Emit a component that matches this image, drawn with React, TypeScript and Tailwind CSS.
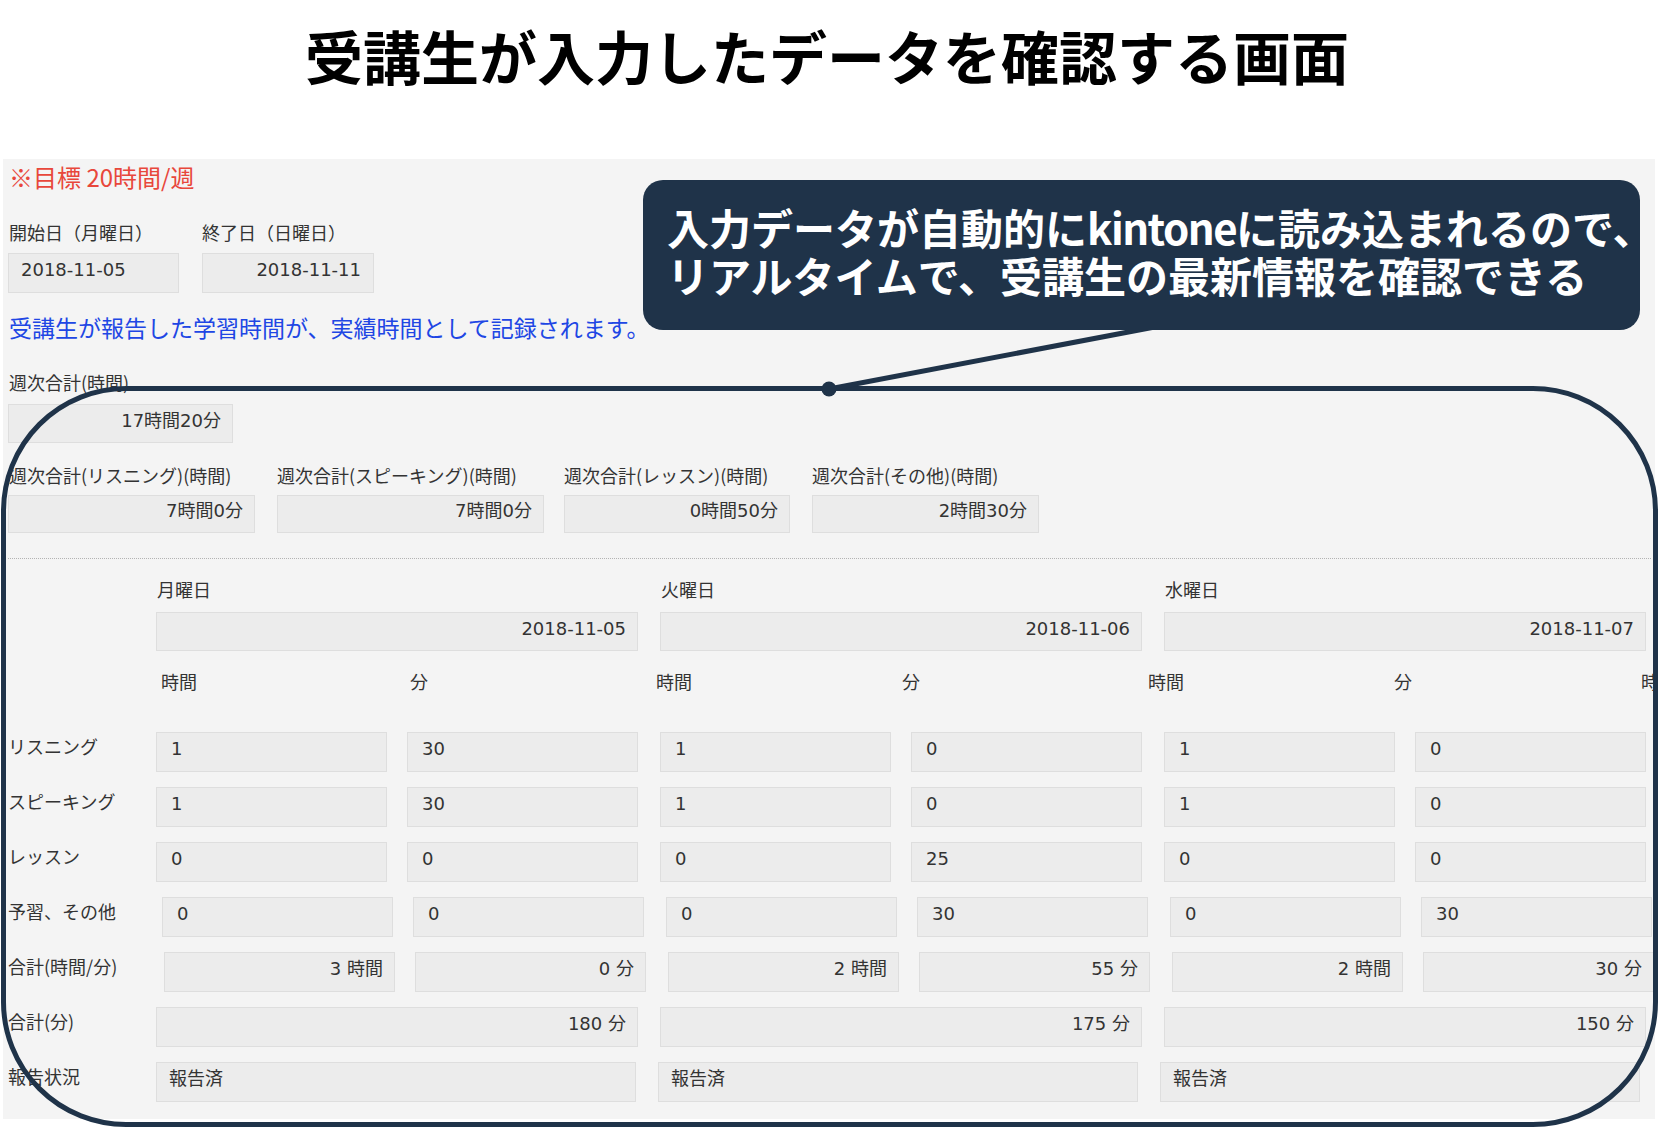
import React from 'react';
import clsx from 'clsx';

type Day = {
    name: string;
    date: string;
    rows: [string, string][];
    hm: [string, string];
    total: string;
    status: string;
};

const days: Day[] = [
    {
        name: '月曜日',
        date: '2018-11-05',
        rows: [['1', '30'], ['1', '30'], ['0', '0'], ['0', '0']],
        hm: ['3 時間', '0 分'],
        total: '180 分',
        status: '報告済',
    },
    {
        name: '火曜日',
        date: '2018-11-06',
        rows: [['1', '0'], ['1', '0'], ['0', '25'], ['0', '30']],
        hm: ['2 時間', '55 分'],
        total: '175 分',
        status: '報告済',
    },
    {
        name: '水曜日',
        date: '2018-11-07',
        rows: [['1', '0'], ['1', '0'], ['0', '0'], ['0', '30']],
        hm: ['2 時間', '30 分'],
        total: '150 分',
        status: '報告済',
    },
];

const rowLabels = ['リスニング', 'スピーキング', 'レッスン', '予習、その他'];
// 予習、その他 and 合計(時間/分) sit a few px to the right in the original form
const rowShift = ['', '', '', 'pl-[6px]'];

const Box = ({ children, right, className }: { children?: React.ReactNode; right?: boolean; className?: string }) => (
    <div
        className={clsx(
            "h-[40px] shrink-0 bg-[#ececec] border border-[#dedede] flex items-center pb-[7px] font-['DejaVu_Sans','Noto_Sans_CJK_JP',sans-serif] text-[18px] text-[#333] whitespace-nowrap",
            right ? 'justify-end pr-[11px]' : 'pl-[14px]',
            className
        )}
    >
        {children}
    </div>
);

const Label = ({ children, className }: { children: React.ReactNode; className?: string }) => (
    <div className={clsx('text-[18px] leading-[24px] text-[#333] whitespace-nowrap', className)}>{children}</div>
);

export default function App() {
    return (
        <div className="relative w-[1679px] h-[1127px] bg-white overflow-hidden font-['Noto_Sans_CJK_JP',sans-serif]">
            <div className="h-[159px] pt-[23px] pr-[25px] text-center text-[58px] leading-[64px] font-bold text-black">
                受講生が入力したデータを確認する画面
            </div>

            <div className="mx-[3px] w-[1652px] h-[960px] bg-[#f4f4f4] overflow-hidden pl-[5px] pt-[2px] flex flex-col">
                <div className="text-[24px] leading-[32px] text-[#e8473b] pl-[1px]">※目標 20時間/週</div>

                <div className="mt-[27px] flex gap-[23px]">
                    <div className="w-[171px]">
                        <Label className="pl-[1px]">開始日（月曜日）</Label>
                        <Box className="mt-[9px] w-full !pl-[12px]">2018-11-05</Box>
                    </div>
                    <div className="w-[172px]">
                        <Label>終了日（日曜日）</Label>
                        <Box right className="mt-[9px] w-full !pr-[12px]">2018-11-11</Box>
                    </div>
                </div>

                <div className="mt-[18px] text-[23px] leading-[32px] text-[#2046e4] pl-[1px]">
                    受講生が報告した学習時間が、実績時間として記録されます。
                </div>

                <div className="mt-[27px] w-[225px]">
                    <Label className="pl-[1px]">週次合計(時間)</Label>
                    <Box right className="mt-[10px] w-full !h-[39px]">17時間20分</Box>
                </div>

                <div className="mt-[20px] flex">
                    <div className="w-[247px]">
                        <Label className="pl-[1px]">週次合計(リスニング)(時間)</Label>
                        <Box right className="mt-[8px] w-full !h-[38px]">7時間0分</Box>
                    </div>
                    <div className="w-[267px] ml-[22px]">
                        <Label>週次合計(スピーキング)(時間)</Label>
                        <Box right className="mt-[8px] w-full !h-[38px]">7時間0分</Box>
                    </div>
                    <div className="w-[226px] ml-[20px]">
                        <Label>週次合計(レッスン)(時間)</Label>
                        <Box right className="mt-[8px] w-full !h-[38px]">0時間50分</Box>
                    </div>
                    <div className="w-[227px] ml-[22px]">
                        <Label>週次合計(その他)(時間)</Label>
                        <Box right className="mt-[8px] w-full !h-[38px]">2時間30分</Box>
                    </div>
                </div>

                <div className="mt-[25px] w-[1643px] border-t border-dotted border-[#b3b3b3]" />

                <div className="mt-[18px] ml-[148px] flex gap-[22px]">
                    {days.map((d) => (
                        <div key={d.name} className="w-[482px] shrink-0">
                            <Label className="pl-[1px]">{d.name}</Label>
                            <Box right className="mt-[11px] w-full !h-[39px]">{d.date}</Box>
                        </div>
                    ))}
                </div>

                <div className="mt-[18px] ml-[153px] flex">
                    <Label className="w-[249px] shrink-0">時間</Label>
                    <Label className="w-[246px] shrink-0">分</Label>
                    <Label className="w-[246px] shrink-0">時間</Label>
                    <Label className="w-[246px] shrink-0">分</Label>
                    <Label className="w-[246px] shrink-0">時間</Label>
                    <Label className="w-[247px] shrink-0">分</Label>
                    <Label className="shrink-0">時間</Label>
                </div>

                <div className="mt-[39px] flex flex-col gap-[15px]">
                    {rowLabels.map((label, i) => (
                        <div key={label} className="flex items-center">
                            <Label className="w-[148px] shrink-0 pb-[13px]">{label}</Label>
                            <div className={clsx('flex gap-[22px]', rowShift[i])}>
                                {days.map((d) => (
                                    <div key={d.name} className="w-[482px] shrink-0 flex justify-between">
                                        <Box className="w-[231px]">{d.rows[i][0]}</Box>
                                        <Box className="w-[231px]">{d.rows[i][1]}</Box>
                                    </div>
                                ))}
                            </div>
                        </div>
                    ))}

                    <div className="flex items-center">
                        <Label className="w-[148px] shrink-0 pb-[13px]">合計(時間/分)</Label>
                        <div className="flex gap-[22px] pl-[8px]">
                            {days.map((d) => (
                                <div key={d.name} className="w-[482px] shrink-0 flex justify-between">
                                    <Box right className="w-[231px]">{d.hm[0]}</Box>
                                    <Box right className="w-[231px]">{d.hm[1]}</Box>
                                </div>
                            ))}
                        </div>
                    </div>

                    <div className="flex items-center">
                        <Label className="w-[148px] shrink-0 pb-[13px]">合計(分)</Label>
                        <div className="flex gap-[22px]">
                            {days.map((d) => (
                                <Box key={d.name} right className="w-[482px]">{d.total}</Box>
                            ))}
                        </div>
                    </div>

                    <div className="flex items-center">
                        <Label className="w-[148px] shrink-0 pb-[13px]">報告状況</Label>
                        <div className="flex gap-[22px]">
                            {days.map((d) => (
                                <Box key={d.name} className="w-[480px] !pl-[12px]">{d.status}</Box>
                            ))}
                        </div>
                    </div>
                </div>
            </div>

            {/* annotation overlay */}
            <div className="absolute left-[1px] top-[386px] w-[1657px] h-[741px] border-[5px] border-[#1f3349] rounded-[125px] pointer-events-none" />
            <svg className="absolute left-0 top-0 pointer-events-none" width="1679" height="1127">
                <line x1="829" y1="389" x2="1160" y2="326" stroke="#1f3349" strokeWidth="5" />
                <circle cx="829" cy="389" r="7.5" fill="#1f3349" />
            </svg>
            <div className="absolute left-[643px] top-[180px] w-[997px] h-[150px] rounded-[20px] bg-[#1f3349] text-white text-[42px] leading-[48px] font-bold pl-[24px] pt-[23px] whitespace-nowrap">
                <div>
                    入力データが自動的に<span className="tracking-[-1.5px]">kintone</span>に読み込まれるので、
                </div>
                <div>リアルタイムで、受講生の最新情報を確認できる</div>
            </div>
        </div>
    );
}
